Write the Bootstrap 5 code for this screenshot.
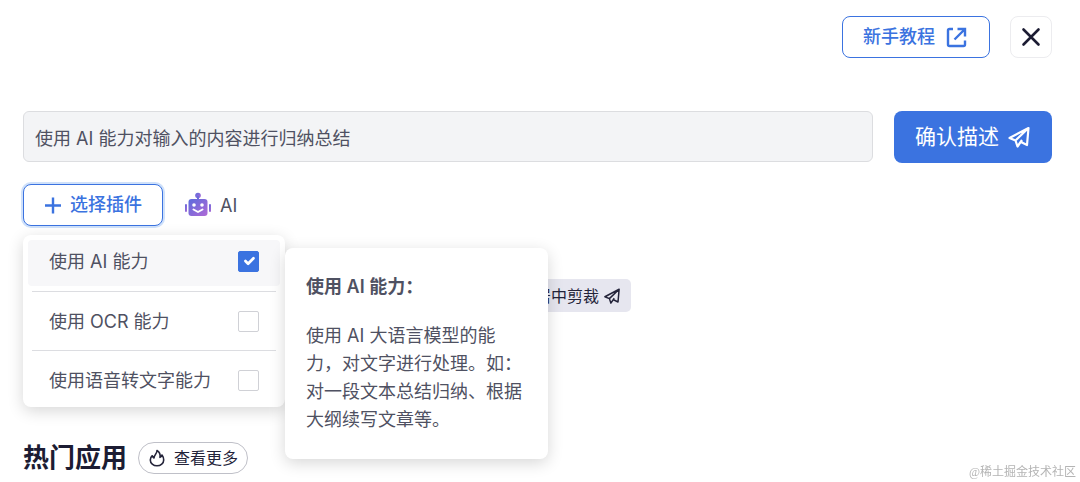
<!DOCTYPE html>
<html lang="zh-CN">
<head>
<meta charset="utf-8">
<meta name="viewport" content="width=device-width, initial-scale=1">
<title>选择插件</title>
<link href="https://cdn.jsdelivr.net/npm/bootstrap@5.3.0/dist/css/bootstrap.min.css" rel="stylesheet">
<style>
  :root { --brand: #3b73e0; --ink: #4f5162; --dark: #1c1c33; }
  body { font-family: Inter, "Noto Sans CJK SC", sans-serif; font-size: 18px; color: var(--ink); background: #fff; }
  .page { padding: 16px 28px 8px 23px; }
  .btn { --bs-btn-font-size: 18px; --bs-btn-border-radius: 8px; --bs-btn-line-height: 24px; }
  .btn-brand-line { color: var(--brand); border-color: var(--brand); background: #fff; font-weight: 500; height: 42px; padding: 0 20px; }
  .btn-close-box { width: 42px; height: 42px; padding: 0; border-color: #ececef; color: var(--dark); }
  .prompt-row { margin-top: 53px; gap: 21px; }
  .prompt-input { height: 51px; padding: 0 11px; font-size: 18px; color: var(--ink); background: #f3f4f6; border-color: #dcdde0; border-radius: 6px; }
  .btn-confirm { --bs-btn-font-size: 21px; height: 52px; padding: 0 20px; color: #fff; background: var(--brand); }
  .plugin-row { margin-top: 21px; gap: 21px; }
  .btn-picker { box-shadow: 0 0 0 2px #cfe1fa; }
  .plugin-menu { top: 100%; left: 0; width: 262px; margin-top: 9px; padding: 5px 5px 3px; border: 0; border-radius: 8px; box-shadow: 0 4px 16px rgba(0,0,0,.16); font-size: 18px; }
  .plugin-option { height: 48px; padding: 0 21px; color: var(--ink); cursor: pointer; }
  .plugin-option.is-active { height: 46px; padding-bottom: 4px; background: #f7f7f9; border-radius: 4px; }
  .plugin-menu hr { margin: 5px 4px; border-color: #dcdde1; opacity: 1; }
  .plugin-option .form-check-input { width: 21px; height: 21px; margin: 0; border: 1px solid #d0d1d6; border-radius: 2px; box-shadow: none; }
  .plugin-option .form-check-input:checked { background-color: var(--brand); border-color: var(--brand); background-size: 18px; }
  .plugin-tip { top: 64px; left: 262px; width: 263px; padding: 25px 21px; border-radius: 8px; background: #fff; box-shadow: 0 4px 16px rgba(0,0,0,.16); line-height: 28px; z-index: 1010; }
  .plugin-tip h2 { font-size: 18px; line-height: 28px; font-weight: 600; margin-bottom: 21px; }
  .suggestions { max-width: 608px; margin-top: 53px; }
  .chip { --bs-btn-font-size: 16px; --bs-btn-border-radius: 5px; height: 33px; padding: 0 10px; color: #24243a; background: #e6e6ef; border: 0; }
  .hot-row { margin-top: 130px; gap: 11px; }
  .hot-row h1 { font-size: 26px; line-height: 32px; font-weight: 700; color: var(--dark); }
  .btn-more { --bs-btn-font-size: 16px; height: 32px; padding: 0 9px; color: #24243a; border-color: #bfc0c8; }
  .watermark { right: 4px; bottom: 1px; font-family: "Liberation Serif", "Noto Sans CJK SC", serif; font-size: 12px; color: #b4b4b4; }
</style>
</head>
<body>
<main class="page">
  <header class="d-flex justify-content-end">
    <a href="#" class="btn btn-brand-line d-flex align-items-center gap-2 me-3">
      <span>新手教程</span>
      <svg width="26" height="26" viewBox="0 0 26 26" fill="none" stroke="currentColor" stroke-width="2.400"><path d="M10 5H6.500Q5 5 5 6.500V20.500Q5 22 6.500 22H20.500Q22 22 22 20.500V16.500M14.500 5H22V12.500M22 5L11.500 15.500"/></svg>
    </a>
    <button type="button" class="btn btn-close-box d-flex align-items-center justify-content-center ms-1" aria-label="关闭">
      <svg width="20" height="20" viewBox="0 0 20 20" fill="none" stroke="currentColor" stroke-width="2.600" stroke-linecap="round"><path d="M2.500 2.500L17.500 17.500M17.500 2.500L2.500 17.500"/></svg>
    </button>
  </header>

  <form class="prompt-row d-flex">
    <input type="text" class="form-control prompt-input flex-grow-1" aria-label="描述" value="使用 AI 能力对输入的内容进行归纳总结">
    <button type="button" class="btn btn-confirm d-flex align-items-center gap-2 flex-shrink-0">
      <span>确认描述</span>
      <svg width="24" height="24" viewBox="0 0 24 24" fill="none" stroke="currentColor" stroke-width="2.200" stroke-linejoin="round"><path d="M14 17L20 20L21.500 3L2.500 13L8.500 15.500L21.500 3M8.500 15.500L10.500 21.500L15 15"/></svg>
    </button>
  </form>

  <div class="plugin-row d-flex align-items-center">
    <div class="dropdown">
      <button type="button" class="btn btn-brand-line btn-picker d-flex align-items-center gap-2" aria-expanded="true">
        <svg width="18" height="18" viewBox="0 0 18 18" fill="none" stroke="currentColor" stroke-width="2.400"><path d="M9 1.500V17.500M1 9.500H17"/></svg>
        <span>选择插件</span>
      </button>
      <div class="dropdown-menu plugin-menu show">
        <label class="plugin-option is-active d-flex align-items-center justify-content-between">使用 AI 能力<input class="form-check-input" type="checkbox" checked></label>
        <hr>
        <label class="plugin-option d-flex align-items-center justify-content-between">使用 OCR 能力<input class="form-check-input" type="checkbox"></label>
        <hr>
        <label class="plugin-option d-flex align-items-center justify-content-between">使用语音转文字能力<input class="form-check-input" type="checkbox"></label>
      </div>
      <div class="plugin-tip position-absolute" role="tooltip">
        <h2>使用 AI 能力：</h2>
        <p class="mb-0">使用 AI 大语言模型的能力，对文字进行处理。如：对一段文本总结归纳、根据大纲续写文章等。</p>
      </div>
    </div>
    <div class="d-flex align-items-center gap-2">
      <svg width="28" height="26" viewBox="0 0 28 26"><defs><linearGradient id="bot" x1="0" y1="0" x2="1" y2="1"><stop offset="0" stop-color="#5b6bdc"/><stop offset="1" stop-color="#b06ad6"/></linearGradient></defs><g fill="url(#bot)"><circle cx="14" cy="3.500" r="2.800"/><rect x="13" y="4" width="2" height="5" fill="#6a6cda"/><rect x="4.500" y="7" width="19" height="17" rx="3"/><rect x="1" y="12" width="2" height="8" rx="1"/><rect x="25" y="12" width="2" height="8" rx="1"/></g><g fill="#fff"><circle cx="10" cy="13" r="1.800"/><circle cx="18" cy="13" r="1.800"/></g><path d="M9.500 17.500L14 20L18.500 17.500" fill="none" stroke="#fff" stroke-width="2" stroke-linecap="round" stroke-linejoin="round"/></svg>
      <span>AI</span>
    </div>
  </div>

  <div class="suggestions d-flex justify-content-end">
    <button type="button" class="btn chip d-flex align-items-center gap-1">
      <span>居中剪裁</span>
      <svg width="18" height="18" viewBox="0 0 24 24" fill="none" stroke="currentColor" stroke-width="2" stroke-linejoin="round"><path d="M14 17L20 20L21.500 3L2.500 13L8.500 15.500L21.500 3M8.500 15.500L10.500 21.500L15 15"/></svg>
    </button>
  </div>

  <section class="hot-row d-flex align-items-center">
    <h1 class="mb-0">热门应用</h1>
    <a href="#" class="btn btn-more rounded-pill d-flex align-items-center gap-2">
      <svg width="18" height="18" viewBox="0 0 18 18" fill="none" stroke="currentColor" stroke-width="1.600" stroke-linejoin="round"><path d="M9 1.500C9.500 4 6 6 6 9C5 8.500 4.500 7.700 4.300 6.700C2.800 8 2.300 9.500 2.300 11A6.700 5.800 0 0 0 15.700 11C15.700 9 15 7.300 14 6C13.700 7 13 7.800 12 8.300C12.500 5.500 11.500 3 9 1.500Z"/></svg>
      <span>查看更多</span>
    </a>
  </section>
</main>
<div class="watermark position-fixed">@稀土掘金技术社区</div>
<script src="https://cdn.jsdelivr.net/npm/bootstrap@5.3.0/dist/js/bootstrap.bundle.min.js"></script>
</body>
</html>
